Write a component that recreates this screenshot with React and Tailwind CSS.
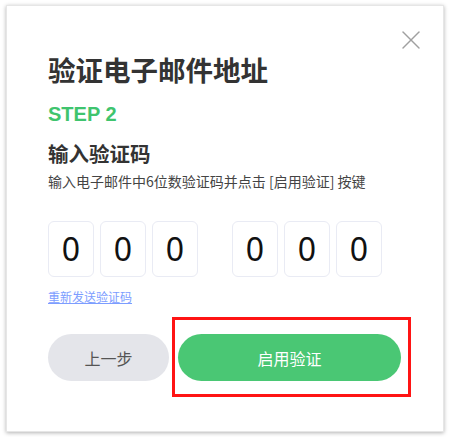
import { X } from "lucide-react";

const cjk = { fontFamily: '"Noto Sans CJK SC", "Noto Sans", sans-serif' };

function CodeBox({ value }) {
  return (
    <div className="w-[46px] h-[56px] rounded-[6px] border border-[#e9ebf4] flex items-center justify-center text-[32px] text-[#111] font-['Noto_Sans',sans-serif]">
      {value}
    </div>
  );
}

export default function App() {
  const code = ["0", "0", "0", "0", "0", "0"];

  return (
    <div className="w-[452px] h-[437px] bg-white pt-[5px] pl-[6px]">
      <div
        className="relative w-[438px] h-[427px] bg-white border border-[#e6e6e6] shadow-[0_1px_4px_rgba(0,0,0,0.3)] pl-[41px] pt-[45px]"
        style={cjk}
      >
        <button className="absolute top-[18px] right-[16px] text-[#a0a0a0]">
          <X size={32} strokeWidth={1.1} />
        </button>

        <h1 className="text-[27.5px] leading-[36px] font-bold text-[#333]">验证电子邮件地址</h1>

        <div className="mt-[15px] text-[20px] leading-[24px] font-bold text-[#3fc46e] font-['Liberation_Sans',sans-serif]">
          STEP 2
        </div>

        <h2 className="mt-[13px] text-[20.5px] leading-[28px] font-bold text-[#333]">输入验证码</h2>

        <p className="mt-[4px] text-[14px] leading-[20px] text-[#444]">
          输入电子邮件中6位数验证码并点击 [启用验证] 按键
        </p>

        <div className="mt-[30px] flex gap-[34px]">
          <div className="flex gap-[6px]">
            {code.slice(0, 3).map((d, i) => (
              <CodeBox key={i} value={d} />
            ))}
          </div>
          <div className="flex gap-[6px]">
            {code.slice(3).map((d, i) => (
              <CodeBox key={i} value={d} />
            ))}
          </div>
        </div>

        <a className="mt-[11px] block w-fit text-[12px] leading-[18px] text-[#7c9dff] underline">
          重新发送验证码
        </a>

        <div className="mt-[28px] flex gap-[9px]">
          <button className="w-[121px] h-[47px] rounded-full bg-[#e4e5ea] text-[16px] text-[#555]">
            上一步
          </button>
          <div className="relative">
            <button className="w-[223px] h-[47px] rounded-full bg-[#4ac774] text-[16px] text-white">
              启用验证
            </button>
            <div className="absolute -left-[6px] -right-[10px] -top-[17px] -bottom-[16px] border-[3px] border-[#ff1414]" />
          </div>
        </div>
      </div>
    </div>
  );
}
